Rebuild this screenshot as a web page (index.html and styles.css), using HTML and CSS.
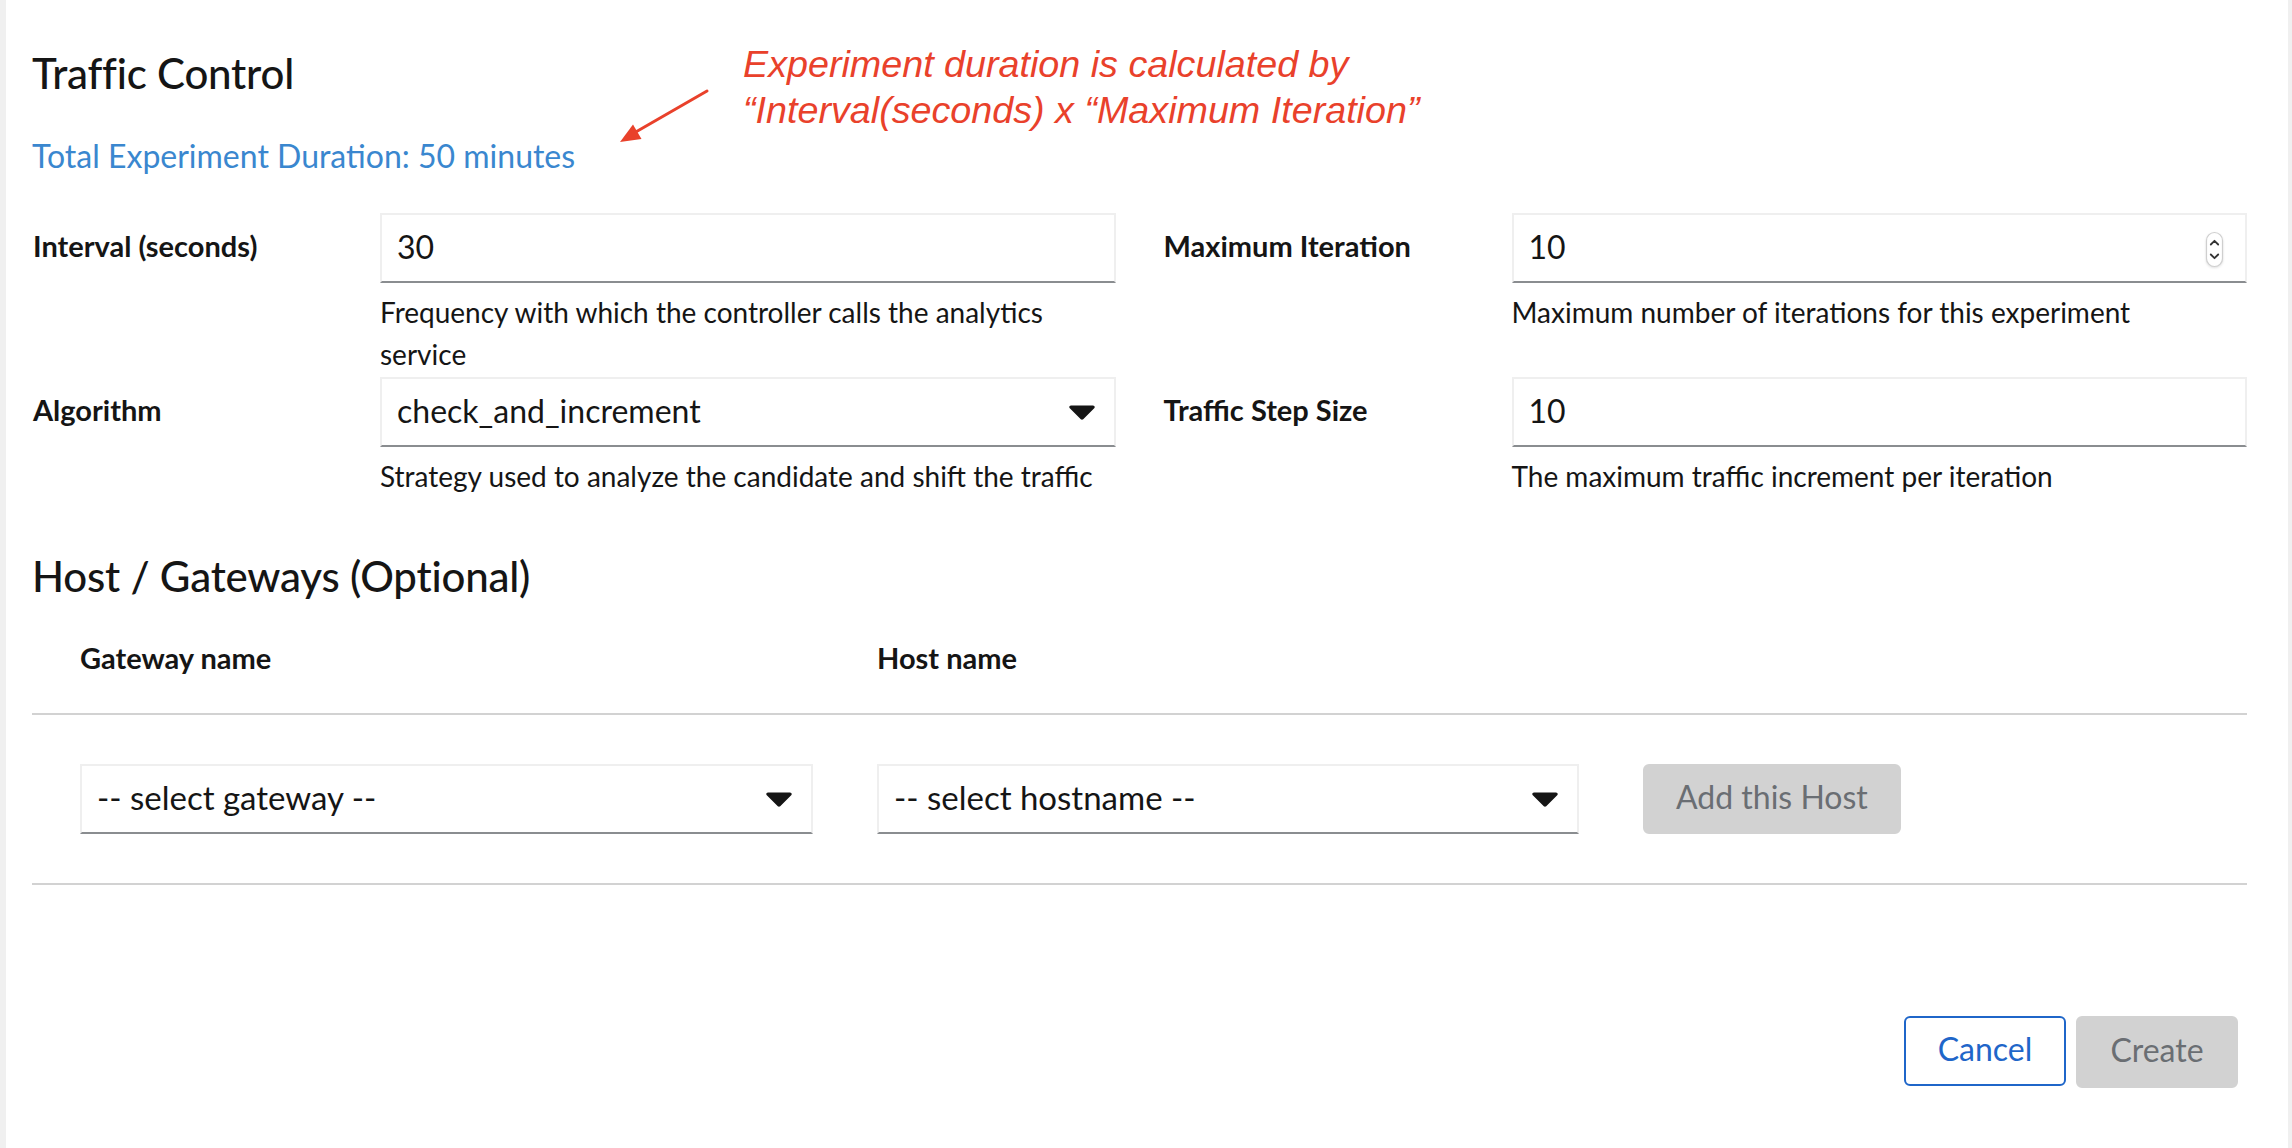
FILE: index.html
```html
<!DOCTYPE html>
<html lang="en">
<head>
<meta charset="utf-8">
<title>Traffic Control</title>
<link rel="stylesheet" href="styles.css">
</head>
<body>
<div class="panel">
  <h1 class="title">Traffic Control</h1>
  <div class="duration">Total Experiment Duration: 50 minutes</div>

  <div class="form">
    <div class="label">Interval (seconds)</div>
    <div class="field">
      <div class="input">30</div>
      <div class="helper">Frequency with which the controller calls the analytics service</div>
    </div>
    <div class="label label-right">Maximum Iteration</div>
    <div class="field">
      <div class="input">
        <span>10</span>
        <svg class="spin" width="19" height="37" viewBox="0 0 19 37">
          <rect x="1.5" y="1.5" width="16" height="34" rx="8" fill="#fff" stroke="#cfcfcf" stroke-width="1.2"/>
          <path d="M5.8 13.5 L9.5 9.8 L13.2 13.5" fill="none" stroke="#333" stroke-width="1.8" stroke-linecap="round" stroke-linejoin="round"/>
          <path d="M5.8 23.5 L9.5 27.2 L13.2 23.5" fill="none" stroke="#333" stroke-width="1.8" stroke-linecap="round" stroke-linejoin="round"/>
        </svg>
      </div>
      <div class="helper">Maximum number of iterations for this experiment</div>
    </div>

    <div class="label">Algorithm</div>
    <div class="field">
      <div class="input select">
        <span>check_and_increment</span>
        <svg class="caret" width="26" height="15" viewBox="8 190 304 170"><path d="M31.3 192h257.3c17.8 0 26.7 21.5 14.1 34.1L174.1 354.8c-7.8 7.8-20.5 7.8-28.3 0L17.2 226.1C4.6 213.5 13.5 192 31.3 192z" fill="#151515"/></svg>
      </div>
      <div class="helper">Strategy used to analyze the candidate and shift the traffic</div>
    </div>
    <div class="label label-right">Traffic Step Size</div>
    <div class="field">
      <div class="input">10</div>
      <div class="helper">The maximum traffic increment per iteration</div>
    </div>
  </div>

  <h2 class="subtitle">Host / Gateways (Optional)</h2>

  <div class="table">
    <div class="trow thead">
      <div class="th">Gateway name</div>
      <div class="th">Host name</div>
      <div></div>
    </div>
    <div class="trow tbody">
      <div class="input select">
        <span>-- select gateway --</span>
        <svg class="caret" width="26" height="15" viewBox="8 190 304 170"><path d="M31.3 192h257.3c17.8 0 26.7 21.5 14.1 34.1L174.1 354.8c-7.8 7.8-20.5 7.8-28.3 0L17.2 226.1C4.6 213.5 13.5 192 31.3 192z" fill="#151515"/></svg>
      </div>
      <div class="input select">
        <span>-- select hostname --</span>
        <svg class="caret" width="26" height="15" viewBox="8 190 304 170"><path d="M31.3 192h257.3c17.8 0 26.7 21.5 14.1 34.1L174.1 354.8c-7.8 7.8-20.5 7.8-28.3 0L17.2 226.1C4.6 213.5 13.5 192 31.3 192z" fill="#151515"/></svg>
      </div>
      <div><button class="btn btn-disabled">Add this Host</button></div>
    </div>
  </div>

  <div class="footer">
    <button class="btn btn-secondary">Cancel</button>
    <button class="btn btn-disabled btn-create">Create</button>
  </div>
</div>

<div class="note">Experiment duration is calculated by<br>“Interval(seconds) x “Maximum Iteration”</div>
<svg class="arrow" width="120" height="75" viewBox="600 80 120 75">
  <path d="M707 91 L634 133" stroke="#e9412b" stroke-width="3" stroke-linecap="round" fill="none"/>
  <polygon points="620,142 641.5,139 633,124.5" fill="#e9412b"/>
</svg>
</body>
</html>
```

FILE: styles.css
```css
html, body {
  margin: 0;
  padding: 0;
}

body {
  position: relative;
  background: #f0f0f0;
  font-family: Lato, "Noto Sans", sans-serif;
  color: #151515;
}

.panel {
  margin: 0 4px 0 6px;
  background: #ffffff;
  min-height: 1148px;
  box-sizing: border-box;
  padding: 47px 41px 0 26px;
}

.title {
  margin: 0;
  font-size: 42px;
  line-height: 52px;
  font-weight: 500;
  letter-spacing: -0.2px;
}

.duration {
  margin-top: 33px;
  font-size: 32px;
  line-height: 48px;
  color: #3a87cf;
}

.form {
  margin-top: 33px;
  display: grid;
  grid-template-columns: 348px 1fr 396px 1fr;
  row-gap: 2px;
  align-items: start;
}

.label {
  height: 70px;
  box-sizing: border-box;
  padding-bottom: 5px;
  display: flex;
  align-items: center;
  font-size: 29px;
  font-weight: 700;
  padding-left: 1px;
}

.label-right {
  padding-left: 48px;
}

.input {
  height: 70px;
  box-sizing: border-box;
  border: 2px solid #efefef;
  border-bottom-color: #8a8d90;
  padding: 0 21px 4px 15px;
  display: flex;
  align-items: center;
  justify-content: space-between;
  font-size: 32px;
  color: #151515;
  background: #fff;
}

.select .caret {
  margin-right: -2px;
  margin-top: 4px;
  flex: none;
}

.spin {
  flex: none;
  margin-top: 6px;
  filter: drop-shadow(0 1px 1px rgba(0,0,0,0.12));
}

.helper {
  margin-top: 8px;
  font-size: 28px;
  line-height: 42px;
  color: #151515;
}

.subtitle {
  margin: 53px 0 0 0;
  font-size: 42px;
  line-height: 52px;
  font-weight: 500;
  letter-spacing: -0.2px;
}

.trow {
  display: grid;
  grid-template-columns: 733px 702px auto;
  column-gap: 64px;
  padding-left: 48px;
  align-items: center;
  border-bottom: 2px solid #d2d2d2;
}

.thead {
  height: 111px;
}

.th {
  font-size: 29px;
  font-weight: 700;
}

.tbody {
  height: 168px;
}

.tbody .input {
  font-size: 33px;
}

.btn {
  font-family: Lato, "Noto Sans", sans-serif;
  font-size: 32px;
  height: 70px;
  border-radius: 6px;
  border: 2px solid transparent;
  padding: 0 31px 5px;
  cursor: pointer;
}

.btn-disabled {
  background: #d2d2d2;
  color: #6a6e73;
  border-color: #d2d2d2;
}

.btn-secondary {
  width: 162px;
  background: #fff;
  color: #1f66c9;
  border-color: #1f66c9;
}

.btn-create {
  width: 162px;
  height: 72px;
}

.footer {
  margin-top: 131px;
  display: flex;
  justify-content: flex-end;
  align-items: flex-start;
  gap: 10px;
  padding-right: 9px;
}

.note {
  position: absolute;
  left: 743px;
  top: 41px;
  font-family: "Liberation Sans", Arial, sans-serif;
  font-style: italic;
  font-size: 37.7px;
  line-height: 46px;
  color: #e9412b;
  white-space: nowrap;
}

.arrow {
  position: absolute;
  left: 600px;
  top: 80px;
}
```
